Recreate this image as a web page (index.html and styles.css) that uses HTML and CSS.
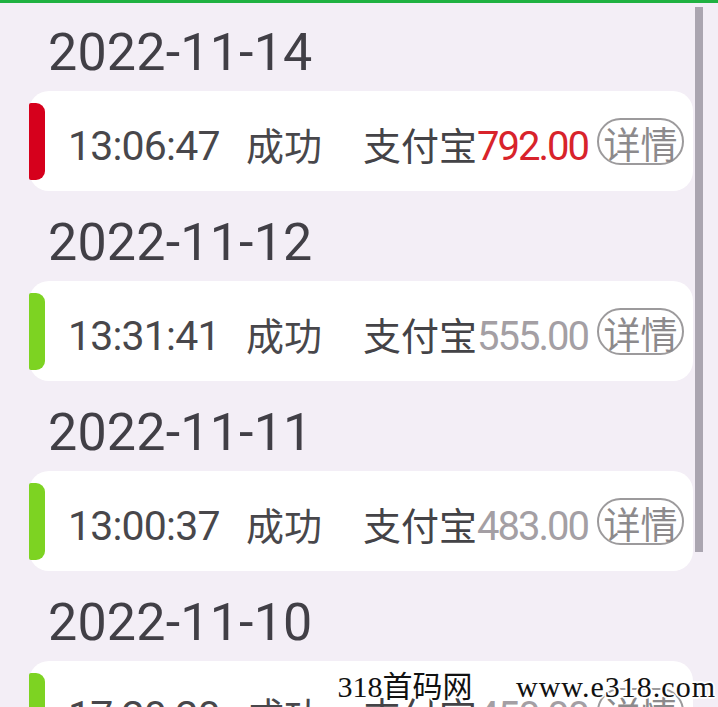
FILE: index.html
```html
<!DOCTYPE html>
<html lang="zh-CN">
<head>
    <meta charset="UTF-8">
    <meta name="viewport" content="width=device-width, initial-scale=1.0">
    <link rel="stylesheet" href="styles.css">
</head>
<body>
    <div class="topbar"></div>
    <main class="list">
        <div class="day">
            <div class="date">2022-11-14</div>
            <div class="card">
                <span class="mark mark-red"></span>
                <div class="info">
                    <span class="time">13:06:47</span>
                    <span class="state">成功</span>
                    <span class="way">支付宝</span><span class="amount amount-red">792.00</span>
                </div>
                <span class="detail">详情</span>
            </div>
        </div>
        <div class="day">
            <div class="date">2022-11-12</div>
            <div class="card">
                <span class="mark mark-green"></span>
                <div class="info">
                    <span class="time">13:31:41</span>
                    <span class="state">成功</span>
                    <span class="way">支付宝</span><span class="amount">555.00</span>
                </div>
                <span class="detail">详情</span>
            </div>
        </div>
        <div class="day">
            <div class="date">2022-11-11</div>
            <div class="card">
                <span class="mark mark-green"></span>
                <div class="info">
                    <span class="time">13:00:37</span>
                    <span class="state">成功</span>
                    <span class="way">支付宝</span><span class="amount">483.00</span>
                </div>
                <span class="detail">详情</span>
            </div>
        </div>
        <div class="day">
            <div class="date">2022-11-10</div>
            <div class="card">
                <span class="mark mark-green"></span>
                <div class="info">
                    <span class="time">17:20:20</span>
                    <span class="state">成功</span>
                    <span class="way">支付宝</span><span class="amount">450.00</span>
                </div>
                <span class="detail">详情</span>
            </div>
        </div>
    </main>
    <!-- полоса прокрутки и водяной знак поверх списка -->
    <div class="scrollbar"></div>
    <div class="watermark">318首码网 <span class="wm-url">www.e318.com</span></div>
</body>
</html>
```

FILE: styles.css
```css
html, body {
    height: 100%;
}

body {
    background-color: #f3eef6;
    margin: 0;
    padding: 0;
    overflow: hidden;
    position: relative;
    font-family: Roboto, "Noto Sans CJK SC", sans-serif;
    color: #46454a;
}

.topbar {
    height: 3px;
    background-color: #1fb141;
}

.list {
    padding: 0 25px 0 29px;
}

.date {
    height: 83px;
    padding-top: 7px;
    padding-left: 19px;
    line-height: 90px;
    font-size: 52px;
    letter-spacing: 0.2px;
    color: #413f46;
}

.day:first-child .date {
    margin-top: -2px;
}

.card {
    display: flex;
    align-items: center;
    height: 100px;
    background-color: #ffffff;
    border-radius: 20px;
}

.mark {
    align-self: stretch;
    width: 16px;
    margin: 12px 0 11px 0;
    border-radius: 2px 9px 9px 2px;
    flex: none;
}

.mark-red {
    background-color: #d6001c;
}

.mark-green {
    background-color: #7dd322;
}

.info {
    display: flex;
    align-items: baseline;
    margin-top: 4px;
    margin-left: 23px;
    white-space: nowrap;
}

.time {
    width: 178px;
    flex: none;
    font-size: 41px;
    letter-spacing: -0.8px;
    color: #48474b;
}

.state {
    width: 117px;
    flex: none;
    font-size: 38px;
    color: #48474b;
}

.way {
    font-size: 38px;
    color: #444347;
}

.amount {
    font-size: 40px;
    letter-spacing: -2px;
    color: #a49fa4;
}

.amount-red {
    color: #d8232b;
}

.detail {
    margin-left: auto;
    margin-right: 9px;
    box-sizing: border-box;
    width: 87px;
    height: 47px;
    border: 2px solid #9c9a9c;
    border-radius: 24px;
    font-size: 37px;
    line-height: 54px;
    text-align: center;
    color: #8c8a8c;
    flex: none;
}

.scrollbar {
    position: absolute;
    top: 7px;
    left: 695px;
    width: 8px;
    height: 545px;
    background-color: #aaa5b0;
}

.watermark {
    position: absolute;
    right: 2px;
    bottom: 1px;
    font-family: "Liberation Serif", "Noto Sans CJK SC", serif;
    font-size: 30px;
    color: #111111;
    white-space: nowrap;
    text-shadow: 2px 0 0 #fff, -2px 0 0 #fff, 0 2px 0 #fff, 0 -2px 0 #fff,
        1px 1px 0 #fff, -1px -1px 0 #fff, 1px -1px 0 #fff, -1px 1px 0 #fff;
}

.wm-url {
    margin-left: 36px;
    letter-spacing: 1px;
}
```
